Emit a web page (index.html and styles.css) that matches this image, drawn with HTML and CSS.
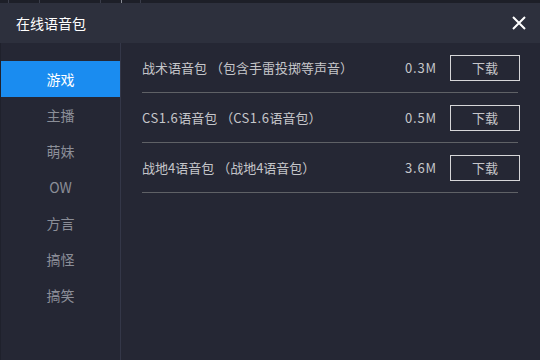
FILE: index.html
```html
<!DOCTYPE html>
<html lang="zh-CN">
<head>
<meta charset="utf-8">
<title>在线语音包</title>
<link rel="stylesheet" href="styles.css">
</head>
<body>
<div class="topbar">
  <span class="tick t1"></span><span class="tick t2"></span><span class="tick t3"></span><span class="tick t4"></span><span class="tick t5"></span>
</div>
<div class="header">
  <div class="title">在线语音包</div>
  <svg class="close" width="14" height="14" viewBox="0 0 14 14"><path d="M1 1L13 13M13 1L1 13" stroke="#ffffff" stroke-width="2" fill="none"/></svg>
</div>
<div class="main">
  <div class="sidebar">
    <div class="item active">游戏</div>
    <div class="item">主播</div>
    <div class="item">萌妹</div>
    <div class="item">OW</div>
    <div class="item">方言</div>
    <div class="item">搞怪</div>
    <div class="item">搞笑</div>
  </div>
  <div class="content">
    <div class="row">
      <div class="name">战术语音包 （包含手雷投掷等声音）</div>
      <div class="size">0.3M</div>
      <div class="btn">下载</div>
    </div>
    <div class="row">
      <div class="name"><span class="latin">CS1.6</span>语音包 （<span class="latin">CS1.6</span>语音包）</div>
      <div class="size">0.5M</div>
      <div class="btn">下载</div>
    </div>
    <div class="row">
      <div class="name">战地4语音包 （战地4语音包）</div>
      <div class="size">3.6M</div>
      <div class="btn">下载</div>
    </div>
  </div>
</div>
</body>
</html>
```
FILE: styles.css
```css
html, body {
  margin: 0;
  padding: 0;
}
body {
  width: 540px;
  height: 360px;
  overflow: hidden;
  background: #252734;
  font-family: "Noto Sans CJK SC", "Noto Sans", sans-serif;
  color: #c5c6ca;
}
.topbar {
  height: 3px;
  background: #1d1f28;
  position: relative;
}
.tick {
  position: absolute;
  top: 0;
  width: 1px;
  height: 3px;
  background: #3a3d4a;
}
.t1 { left: 8px; }
.t2 { left: 39px; }
.t3 { left: 100px; }
.t4 { left: 121px; background: #8a8d96; }
.t5 { left: 140px; }
.header {
  height: 40px;
  background: #2d303d;
  display: flex;
  align-items: center;
  justify-content: space-between;
  padding: 0 14px 0 16px;
}
.title {
  font-size: 14px;
  color: #ffffff;
}
.close {
  display: block;
}
.main {
  display: flex;
  height: 317px;
  border-left: 1px solid #1f212c;
}
.sidebar {
  width: 119px;
  border-right: 1px solid #343748;
  padding-top: 18px;
}
.item {
  height: 36px;
  line-height: 36px;
  text-align: center;
  font-size: 14px;
  color: #8b8e98;
}
.item.active {
  background: #1a8cf0;
  color: #ffffff;
}
.content {
  flex: 1;
  padding: 0 22px 0 21px;
}
.row {
  height: 49px;
  border-bottom: 1px solid #5f6166;
  display: flex;
  align-items: center;
  font-size: 13px;
}
.name {
  flex: 1;
  padding-bottom: 1px;
}
.latin {
  letter-spacing: 0.5px;
}
.size {
  width: 45px;
  letter-spacing: 0.8px;
}
.btn {
  width: 70px;
  height: 26px;
  box-sizing: border-box;
  border: 1px solid #d6d6d8;
  margin-right: -2px;
  display: flex;
  align-items: center;
  justify-content: center;
}
```
